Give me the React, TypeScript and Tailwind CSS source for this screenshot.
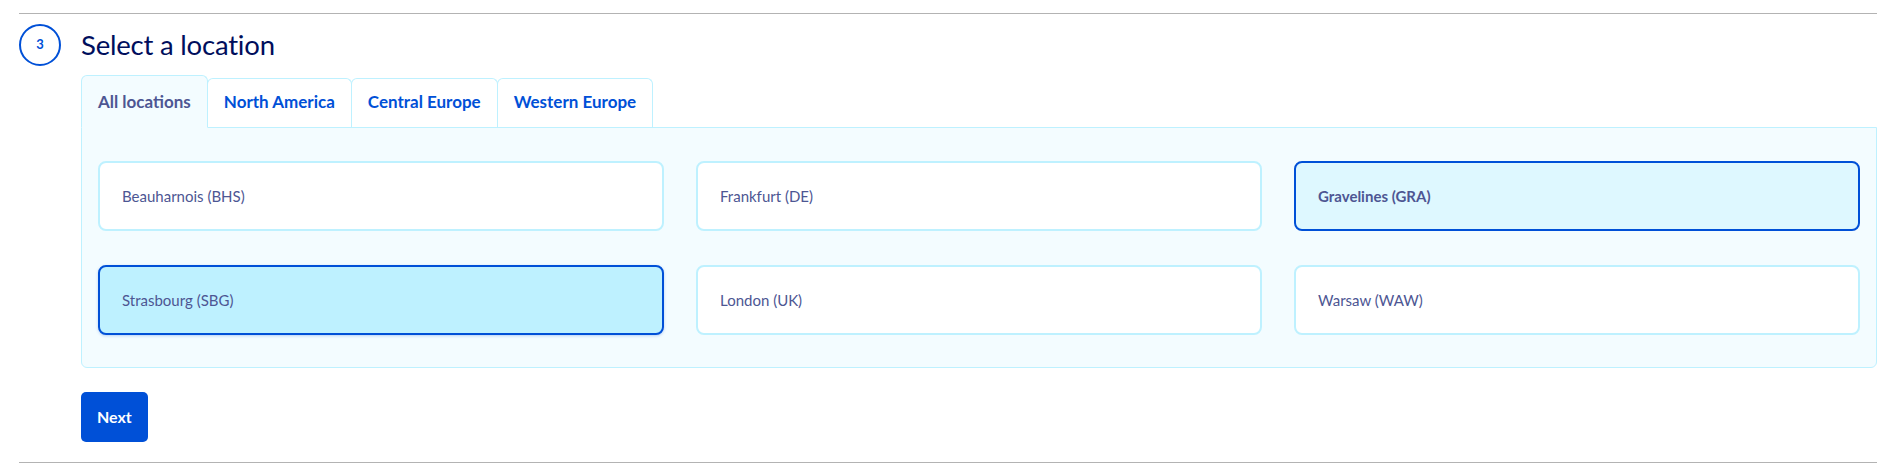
import { useState } from "react";

const tabs = ["All locations", "North America", "Central Europe", "Western Europe"];

const locations = [
  "Beauharnois (BHS)",
  "Frankfurt (DE)",
  "Gravelines (GRA)",
  "Strasbourg (SBG)",
  "London (UK)",
  "Warsaw (WAW)",
];

export default function App() {
  const [activeTab, setActiveTab] = useState(0);
  const [selected, setSelected] = useState("Gravelines (GRA)");
  const hovered = "Strasbourg (SBG)";

  return (
    <div
      className="w-[1898px] h-[473px] bg-white pl-[19px] pr-[21px] pt-[13px]"
      style={{ fontFamily: "Lato, 'Liberation Sans', sans-serif" }}
    >
      <div className="h-px bg-[#b3b3b3]" />

      <div className="flex items-center gap-5 mt-[10px]">
        <div className="w-[42px] h-[42px] rounded-full border-2 border-[#0050d7] flex items-center justify-center text-[13px] font-bold text-[#0050d7]">
          3
        </div>
        <h2 className="text-[27.5px] leading-[32px] text-[#000e5c] tracking-[-0.2px]">Select a location</h2>
      </div>

      <div className="ml-[62px] mt-[9px]">
        <div className="flex items-end">
          {tabs.map((tab, i) => {
            const active = i === activeTab;
            return (
              <button
                key={tab}
                onClick={() => setActiveTab(i)}
                className={
                  active
                    ? "relative z-10 -mb-px px-4 pt-[14px] pb-[13px] text-[17px] leading-[24px] font-bold text-[#4d5693] bg-[#f3fcff] border border-[#bef1ff] border-b-[#f3fcff] rounded-t-md"
                    : "-ml-px px-4 pt-[11px] pb-[13px] text-[17px] leading-[24px] font-bold text-[#0050d7] bg-white border border-[#bef1ff] border-b-0 rounded-t-md"
                }
              >
                {tab}
              </button>
            );
          })}
        </div>

        <div className="border border-[#bef1ff] bg-[#f3fcff] rounded-b-md px-4 pt-[33px] pb-[32px]">
          <div className="grid grid-cols-3 gap-x-8 gap-y-[34px]">
            {locations.map((loc) => {
              const isSel = loc === selected;
              const isHover = loc === hovered;
              let cls =
                "h-[70px] rounded-lg border-2 px-[22px] text-left text-[15px] text-[#4d5693] ";
              if (isSel) cls += "border-[#0050d7] bg-[#def8ff] font-bold";
              else if (isHover) cls += "border-[#0050d7] bg-[#bef1ff] shadow-[0_1px_3px_rgba(0,80,215,0.25)]";
              else cls += "border-[#bef1ff] bg-white";
              return (
                <button key={loc} onClick={() => setSelected(loc)} className={cls}>
                  {loc}
                </button>
              );
            })}
          </div>
        </div>
      </div>

      <div className="ml-[62px] mt-[24px]">
        <button className="h-[50px] px-4 rounded-[5px] bg-[#0050d7] text-white font-bold text-[16px]">
          Next
        </button>
      </div>

      <div className="h-px bg-[#b3b3b3] mt-[20px]" />
    </div>
  );
}
